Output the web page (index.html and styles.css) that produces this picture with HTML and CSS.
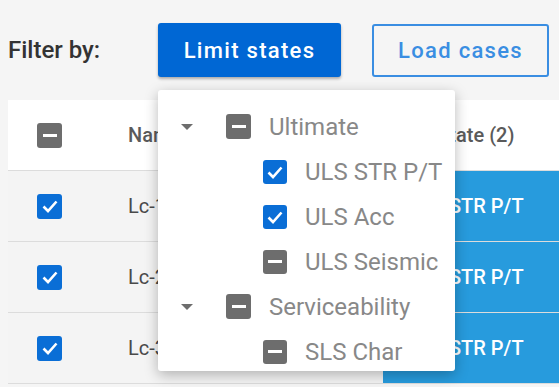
FILE: index.html
```html
<!DOCTYPE html>
<html lang="en">
<head>
    <meta charset="UTF-8" />
    <meta name="viewport" content="width=device-width, initial-scale=1" />
    <title>Filter by limit states</title>
    <link rel="stylesheet" href="styles.css">
</head>
<body>
    <div class="toolbar">
        <span class="filter-label">Filter by:</span>
        <button class="btn btn-primary">Limit states</button>
        <button class="btn btn-outline">Load cases</button>
    </div>

    <div class="table">
        <div class="row head">
            <div class="cell check"><span class="box box-grey"><span class="dash"></span></span></div>
            <div class="cell name">Name</div>
            <div class="cell state">Limit state (2)</div>
        </div>
        <div class="row">
            <div class="cell check"><span class="box box-blue"><svg viewBox="0 0 24 24"><polyline points="5.5,12.5 10,17 18.5,7.5" /></svg></span></div>
            <div class="cell name">Lc-1</div>
            <div class="cell state blue">ULS STR P/T</div>
        </div>
        <div class="row">
            <div class="cell check"><span class="box box-blue"><svg viewBox="0 0 24 24"><polyline points="5.5,12.5 10,17 18.5,7.5" /></svg></span></div>
            <div class="cell name">Lc-2</div>
            <div class="cell state blue">ULS STR P/T</div>
        </div>
        <div class="row">
            <div class="cell check"><span class="box box-blue"><svg viewBox="0 0 24 24"><polyline points="5.5,12.5 10,17 18.5,7.5" /></svg></span></div>
            <div class="cell name">Lc-3</div>
            <div class="cell state blue">ULS STR P/T</div>
        </div>
    </div>

    <div class="menu">
        <div class="item group">
            <span class="caret"></span>
            <span class="box box-grey"><span class="dash"></span></span>
            <span class="label">Ultimate</span>
        </div>
        <div class="item sub">
            <span class="box box-blue"><svg viewBox="0 0 24 24"><polyline points="5.5,12.5 10,17 18.5,7.5" /></svg></span>
            <span class="label">ULS STR P/T</span>
        </div>
        <div class="item sub">
            <span class="box box-blue"><svg viewBox="0 0 24 24"><polyline points="5.5,12.5 10,17 18.5,7.5" /></svg></span>
            <span class="label">ULS Acc</span>
        </div>
        <div class="item sub">
            <span class="box box-grey"><span class="dash"></span></span>
            <span class="label">ULS Seismic</span>
        </div>
        <div class="item group">
            <span class="caret"></span>
            <span class="box box-grey"><span class="dash"></span></span>
            <span class="label">Serviceability</span>
        </div>
        <div class="item sub">
            <span class="box box-grey"><span class="dash"></span></span>
            <span class="label">SLS Char</span>
        </div>
    </div>
</body>
</html>
```

FILE: styles.css
```css
body {
    margin: 0;
    background: #f5f5f5;
    font-family: Roboto, "Liberation Sans", sans-serif;
    overflow: hidden;
}
.toolbar {
    display: flex;
    align-items: center;
    padding: 23px 0 0 8px;
    height: 54px;
}
.filter-label {
    font-size: 24px;
    font-weight: 500;
    color: #333;
    width: 150px;
}
.btn {
    font-family: inherit;
    font-size: 22px;
    font-weight: 500;
    letter-spacing: 1.3px;
    border-radius: 3px;
    cursor: pointer;
    padding: 0;
}
.btn-primary {
    width: 183px;
    height: 54px;
    background: #0067d4;
    color: #fff;
    border: none;
    box-shadow: 0 2px 3px rgba(0, 0, 0, 0.3);
}
.btn-outline {
    margin-left: 31px;
    width: 177px;
    height: 53px;
    background: transparent;
    color: #3a8ee2;
    border: 2px solid #3a8ee2;
}
.table {
    margin: 23px 0 0 8px;
    width: 600px;
}
.row {
    display: flex;
    height: 70px;
    border-bottom: 1px solid #dcdcdc;
    background: #f4f4f4;
}
.row.head {
    background: #fff;
}
.cell {
    display: flex;
    align-items: center;
    font-size: 20px;
    color: #4a4a4a;
}
.head .cell {
    color: #5a5a5a;
    font-weight: 500;
}
.check {
    width: 100px;
    padding-left: 29px;
    box-sizing: border-box;
}
.check .box {
    width: 25px;
    height: 25px;
}
.name {
    width: 275px;
    padding-left: 20px;
    box-sizing: border-box;
}
.state {
    flex: 1;
    padding-left: 6px;
}
.state.blue {
    background: #279bdd;
    color: #fff;
    font-weight: 500;
    padding-left: 25px;
}
.box {
    width: 24px;
    height: 24px;
    border-radius: 3px;
    display: inline-flex;
    align-items: center;
    justify-content: center;
    flex-shrink: 0;
}
.box-blue {
    background: #0a6ed6;
}
.box-grey {
    background: #6d6d6d;
}
.box svg {
    width: 24px;
    height: 24px;
}
.box polyline {
    fill: none;
    stroke: #fff;
    stroke-width: 2.6;
}
.dash {
    width: 14px;
    height: 3px;
    background: #fff;
}
.menu {
    position: absolute;
    left: 158px;
    top: 90px;
    width: 297px;
    height: 281px;
    padding-top: 14px;
    box-sizing: border-box;
    background: #fff;
    border-radius: 3px;
    box-shadow: 0 4px 14px rgba(0, 0, 0, 0.28);
    overflow: hidden;
}
.item {
    display: flex;
    align-items: center;
    height: 45px;
}
.item .label {
    font-size: 24px;
    color: #888;
    margin-left: 18px;
}
.group {
    padding-left: 23px;
}
.group .box {
    margin-left: 33px;
    width: 25px;
    height: 25px;
}
.sub {
    padding-left: 105px;
}
.caret {
    width: 0;
    height: 0;
    border-left: 6px solid transparent;
    border-right: 6px solid transparent;
    border-top: 6px solid #6d6d6d;
}
```
